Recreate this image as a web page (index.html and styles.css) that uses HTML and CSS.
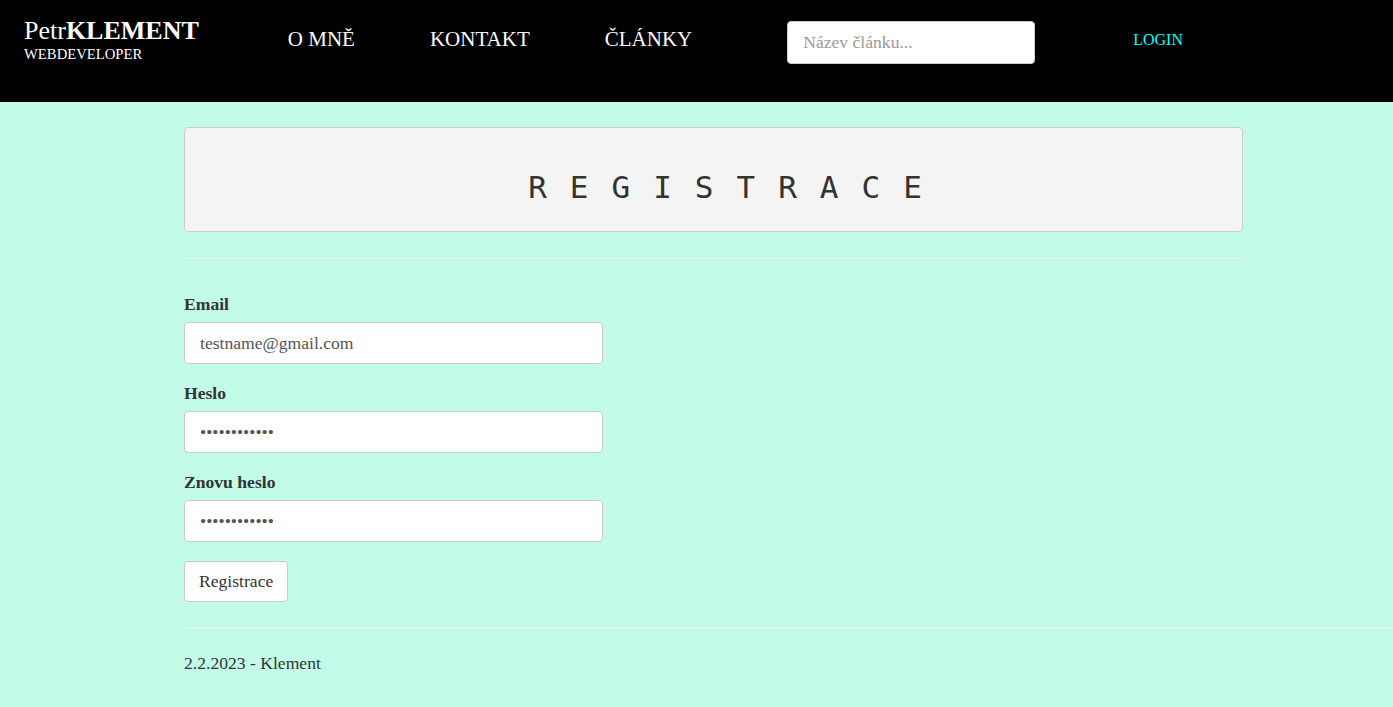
FILE: index.html
```html
<!DOCTYPE html>
<html lang="cs">
<head>
<meta charset="utf-8">
<title>Registrace</title>
<link rel="stylesheet" href="styles.css">
</head>
<body>
<header class="topbar">
  <div class="brand">
    <div class="brand-name">Petr<b>KLEMENT</b></div>
    <div class="brand-sub">WEBDEVELOPER</div>
  </div>
  <nav class="nav">
    <a class="nav-link" href="#">O MNĚ</a>
    <a class="nav-link" href="#">KONTAKT</a>
    <a class="nav-link" href="#">ČLÁNKY</a>
  </nav>
  <input class="search" type="text" placeholder="Název článku...">
  <a class="login" href="#">LOGIN</a>
</header>
<main class="page">
  <div class="content">
    <div class="panel">
      <h1 class="panel-title">REGISTRACE</h1>
    </div>
    <hr class="rule">
    <form class="form">
      <div class="group">
        <label class="label">Email</label>
        <input class="field" type="text" value="testname@gmail.com">
      </div>
      <div class="group">
        <label class="label">Heslo</label>
        <input class="field" type="password" value="abcdefghijkl">
      </div>
      <div class="group">
        <label class="label">Znovu heslo</label>
        <input class="field" type="password" value="abcdefghijkl">
      </div>
      <button class="btn" type="button">Registrace</button>
    </form>
  </div>
  <footer class="footer">
    <hr class="rule footer-rule">
    <p class="footer-text">2.2.2023 - Klement</p>
  </footer>
</main>
</body>
</html>
```
FILE: styles.css
```css
html, body {
  margin: 0;
  padding: 0;
}
body {
  background: #c2fce9;
  font-family: "Liberation Serif", "Times New Roman", serif;
  font-size: 17.6px;
  color: #333;
}
.topbar {
  display: flex;
  align-items: flex-start;
  height: 102px;
  background: #000;
  padding-left: 24px;
  box-sizing: border-box;
}
.brand {
  padding-top: 16px;
  color: #fff;
}
.brand-name {
  font-size: 26px;
  line-height: 30px;
}
.brand-sub {
  font-size: 14.7px;
  line-height: 17px;
}
.nav {
  display: flex;
  gap: 75px;
  margin-left: 89px;
  margin-top: 27px;
}
.nav-link {
  color: #fff;
  text-decoration: none;
  font-size: 21px;
  line-height: 24px;
}
.search {
  margin-left: 95px;
  margin-top: 21px;
  width: 248px;
  height: 43px;
  box-sizing: border-box;
  border: 1px solid #ccc;
  border-radius: 4px;
  padding: 0 15px;
  font-family: "Liberation Serif", "Times New Roman", serif;
  font-size: 17.6px;
  color: #555;
  background: #fff;
}
.search::placeholder {
  color: #999;
}
.login {
  margin-left: 98px;
  margin-top: 30px;
  color: #00ffff;
  text-decoration: none;
  font-size: 16px;
  line-height: 20px;
}
.page {
  padding-left: 184px;
}
.content {
  width: 1059px;
}
.panel {
  margin-top: 25px;
  height: 105px;
  box-sizing: border-box;
  background: #f4f4f4;
  border: 1px solid #ccc;
  border-radius: 4px;
  padding-top: 41px;
}
.panel-title {
  margin: 0;
  padding-left: 46px;
  text-align: center;
  font-family: "DejaVu Sans Mono", monospace;
  font-weight: normal;
  font-size: 31px;
  line-height: 36px;
  letter-spacing: 23px;
  color: #333;
}
.rule {
  border: 0;
  border-top: 1px solid #eef2f0;
  margin: 26px 0 0;
  height: 0;
}
.form {
  padding-top: 34px;
}
.group {
  margin-bottom: 18px;
}
.group:last-of-type {
  margin-bottom: 19px;
}
.label {
  display: block;
  font-weight: bold;
  line-height: 23px;
  margin-bottom: 6px;
}
.field {
  display: block;
  width: 419px;
  height: 42px;
  box-sizing: border-box;
  border: 1px solid #ccc;
  border-radius: 4px;
  padding: 0 15px;
  font-family: "Liberation Serif", "Times New Roman", serif;
  font-size: 17.6px;
  color: #555;
  background: #fff;
}
.btn {
  display: block;
  height: 41px;
  box-sizing: border-box;
  padding: 0 14px;
  border: 1px solid #ccc;
  border-radius: 4px;
  background: #fff;
  font-family: "Liberation Serif", "Times New Roman", serif;
  font-size: 17.6px;
  color: #333;
}
.footer-rule {
  margin-top: 25px;
}
.footer-text {
  margin: 24px 0 0;
  line-height: 23px;
}
```
